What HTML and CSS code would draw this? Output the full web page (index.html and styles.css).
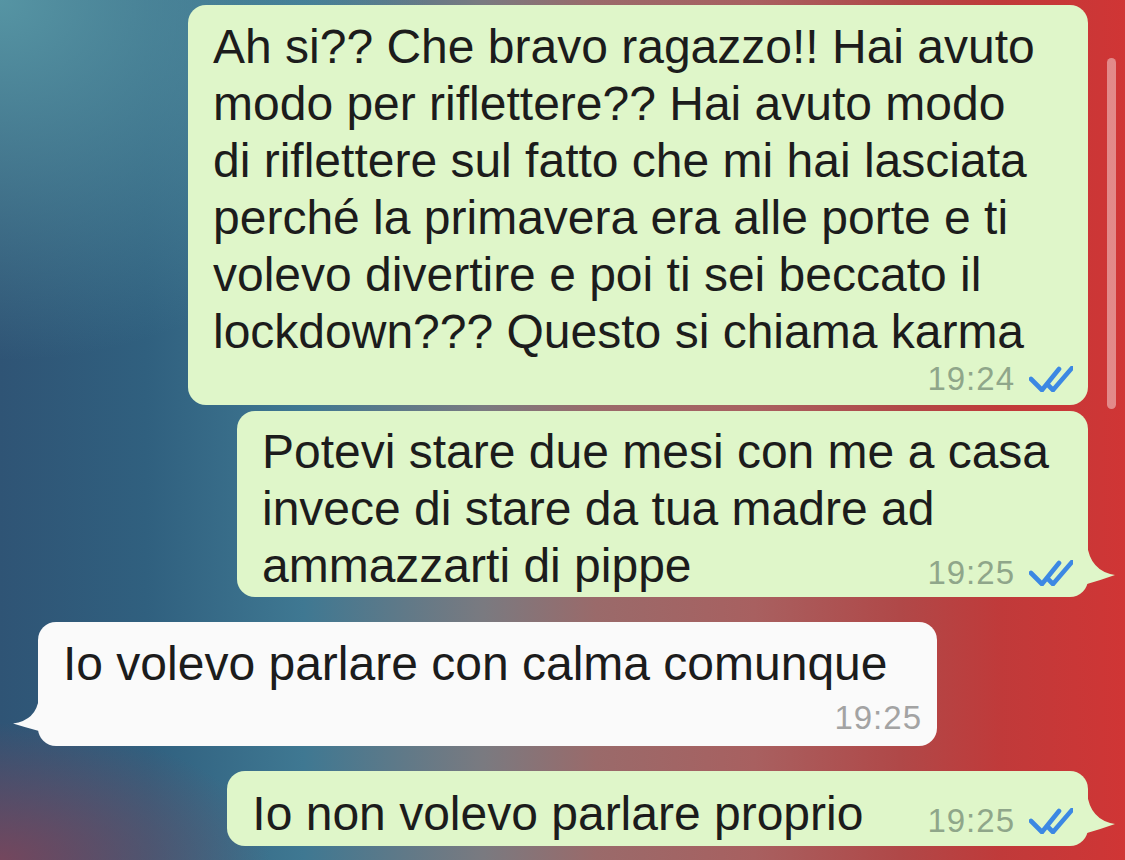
FILE: index.html
```html
<!DOCTYPE html>
<html lang="it">
<head>
    <meta charset="UTF-8">
    <meta name="viewport" content="width=device-width, initial-scale=1.0">
    <title>Chat</title>
    <link rel="stylesheet" href="styles.css">
</head>
<body>
    <div class="chat">
        <!-- sent -->
        <div class="bubble out b1">
            <p class="text">Ah si?? Che bravo ragazzo!! Hai avuto modo per riflettere?? Hai avuto modo di riflettere sul fatto che mi hai lasciata perché la primavera era alle porte e ti volevo divertire e poi ti sei beccato il lockdown??? Questo si chiama karma</p>
            <div class="meta meta-row">
                <span class="time">19:24</span>
                <svg class="ticks" viewBox="0 0 44 26"><path d="M2 13 L13 24 L30 3 M19 19 L24 24 L43 2"/></svg>
            </div>
        </div>

        <div class="bubble out b2">
            <p class="text">Potevi stare due mesi con me a casa invece di stare da tua madre ad ammazzarti di pippe<span class="meta meta-float"><span class="time">19:25</span><svg class="ticks" viewBox="0 0 44 26"><path d="M2 13 L13 24 L30 3 M19 19 L24 24 L43 2"/></svg></span></p>
            <svg class="tail" viewBox="0 0 28 40" preserveAspectRatio="none"><path d="M0 0 Q3 27 28 31 Q14 36 0 40 Z"/></svg>
        </div>

        <!-- received -->
        <div class="bubble in b3 first">
            <p class="text">Io volevo parlare con calma comunque</p>
            <div class="meta meta-row">
                <span class="time">19:25</span>
            </div>
            <svg class="tail" viewBox="0 0 28 40" preserveAspectRatio="none"><path d="M0 0 Q3 27 28 31 Q14 36 0 40 Z"/></svg>
        </div>

        <div class="bubble out b4 first">
            <p class="text">Io non volevo parlare proprio<span class="meta meta-float"><span class="time">19:25</span><svg class="ticks" viewBox="0 0 44 26"><path d="M2 13 L13 24 L30 3 M19 19 L24 24 L43 2"/></svg></span></p>
            <svg class="tail" viewBox="0 0 28 40" preserveAspectRatio="none"><path d="M0 0 Q3 27 28 31 Q14 36 0 40 Z"/></svg>
        </div>
    </div>

    <div class="scrollbar"></div>
</body>
</html>
```

FILE: styles.css
```css
html, body {
    margin: 0;
    height: 100%;
}

body {
    position: relative;
    overflow: hidden;
    font-family: "Liberation Sans", Arial, sans-serif;
    color: #1c1c1c;
    background:
        radial-gradient(ellipse 38% 42% at 0 0, rgba(88, 152, 166, 0.95), rgba(88, 152, 166, 0) 100%),
        radial-gradient(ellipse 24% 16% at 0 100%, rgba(120, 70, 92, 0.95), rgba(120, 70, 92, 0) 100%),
        linear-gradient(90deg, #2f5475 0%, #30607f 13%, #3f7892 27%, #7a7a80 43%, #9a6a6a 53%, #a86060 67%, #b04848 80%, #c03a3a 89%, #d03535 100%);
}

.chat {
    display: flex;
    flex-direction: column;
    gap: 6px;
    padding: 5px 37px 0 38px;
}

.bubble {
    position: relative;
    box-sizing: border-box;
    display: flow-root;
    padding: 13px 15px 3px 25px;
    border-radius: 18px;
}

.bubble.first {
    margin-top: 19px;
}

.out {
    align-self: flex-end;
    background-color: #dff6c9;
}

.in {
    align-self: flex-start;
    background-color: #fafafa;
}

.b1 { width: 900px; padding-bottom: 6px; }
.b1 .text { padding-right: 30px; }
.b2 { width: 851px; padding-top: 12px; }
.b3 { width: 899px; padding-bottom: 8px; }
.b3 .meta-row { margin-top: 6px; }
.b4 { width: fit-content; padding-top: 14px; padding-bottom: 4px; }

.text {
    margin: 0;
    font-size: 48px;
    line-height: 57px;
}

.meta {
    display: flex;
    align-items: center;
    justify-content: flex-end;
    height: 40px;
    line-height: 40px;
}

.meta-row {
    margin-top: -1px;
}

.meta-float {
    float: right;
    margin: 16px 0 0 64px;
}

.time {
    font-size: 33px;
    letter-spacing: 1px;
    color: #8fa68a;
}

.in .time {
    color: #a3a3a3;
}

.ticks {
    width: 44px;
    height: 26px;
    margin-left: 14px;
    fill: none;
    stroke: #3c88e3;
    stroke-width: 4.6;
    stroke-linecap: round;
    stroke-linejoin: round;
}

/* bubble tails */
.tail {
    position: absolute;
    bottom: 13px;
    width: 28px;
    height: 40px;
}

.out .tail {
    right: -27px;
    fill: #dff6c9;
}

.in .tail {
    left: -25px;
    bottom: 15px;
    width: 26px;
    height: 33px;
    fill: #fafafa;
    transform: scaleX(-1);
}

.scrollbar {
    position: absolute;
    top: 58px;
    left: 1107px;
    width: 9px;
    height: 351px;
    border-radius: 5px;
    background-color: rgba(255, 255, 255, 0.42);
}
```
